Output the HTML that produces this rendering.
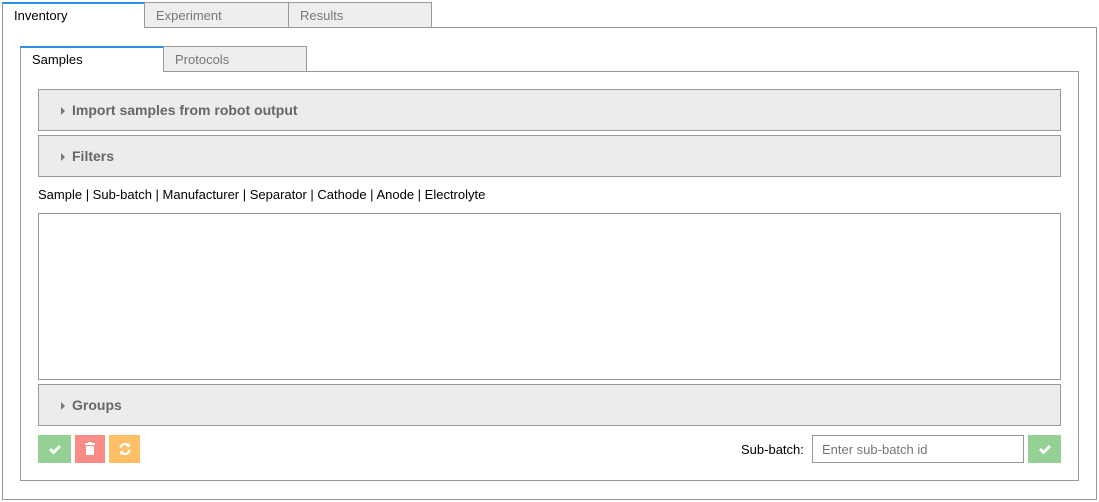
<!DOCTYPE html><html><head><style>
body{margin:0;background:#fff;font-family:"Liberation Sans",Arial,sans-serif;font-size:13px;position:relative;width:1099px;height:502px;overflow:hidden}
.a{position:absolute;box-sizing:border-box}
.tab{height:26px;border:1px solid #999;background:#eee;color:#777;padding:5px 0 0 11px;font-size:13px}
.act{background:#fff;color:#000;border-color:#999;border-top:2px solid #2a8fe6;border-bottom:none;padding-top:4px}
.sec{left:38px;width:1023px;height:42px;border:1px solid #999;background:#ececec;color:#666;font-weight:bold;font-size:14px;padding:12px 0 0 33px}
.sec:before{content:"";position:absolute;left:22px;top:17px;border-left:4px solid #777;border-top:4px solid transparent;border-bottom:4px solid transparent}
.btn{top:435px;height:28px;color:#fff;text-align:center}
</style></head><body>
<div class="a" style="left:2px;top:27px;width:1095px;height:473px;border:1px solid #999"></div>
<div class="a tab act" style="left:2px;top:2px;width:143px;height:26px">Inventory</div>
<div class="a tab" style="left:144px;top:2px;width:145px">Experiment</div>
<div class="a tab" style="left:288px;top:2px;width:144px">Results</div>
<div class="a" style="left:20px;top:71px;width:1059px;height:410px;border:1px solid #999"></div>
<div class="a tab act" style="left:20px;top:46px;width:144px;height:26px">Samples</div>
<div class="a tab" style="left:163px;top:46px;width:144px">Protocols</div>
<div class="a sec" style="top:89px">Import samples from robot output</div>
<div class="a sec" style="top:135px">Filters</div>
<div class="a" style="left:38px;top:187px;color:#000">Sample | Sub-batch | Manufacturer | Separator | Cathode | Anode | Electrolyte</div>
<div class="a" style="left:38px;top:213px;width:1023px;height:167px;border:1px solid #999"></div>
<div class="a sec" style="top:384px">Groups</div>
<div class="a btn" style="left:38px;width:33px;background:#95d095"><svg width="14" height="28" viewBox="0 0 14 28"><path d="M2 14l3.5 3.5L12 11" stroke="#fff" stroke-width="2.8" fill="none"/></svg></div>
<div class="a btn" style="left:75px;width:30px;background:#fa8c85"><svg width="12" height="28" viewBox="0 0 12 28"><rect x="1" y="8" width="10" height="2" fill="#fff"/><rect x="4" y="7" width="4" height="2" fill="#fff"/><rect x="2" y="11" width="8" height="9" fill="#fff"/></svg></div>
<div class="a btn" style="left:109px;width:31px;background:#fdc066"><svg width="14" height="28" viewBox="0 0 14 28"><path d="M2.5 13a4.5 4.5 0 0 1 8.5-1.5M11.5 15a4.5 4.5 0 0 1-8.5 1.5" stroke="#fff" stroke-width="2.2" fill="none"/><path d="M12 8v4h-4zM2 20v-4h4z" fill="#fff"/></svg></div>
<div class="a" style="left:741px;top:442px;color:#000">Sub-batch:</div>
<div class="a" style="left:812px;top:435px;width:212px;height:28px;border:1px solid #999;color:#777;padding:6px 0 0 9px">Enter sub-batch id</div>
<div class="a btn" style="left:1028px;width:33px;background:#95d095"><svg width="14" height="28" viewBox="0 0 14 28"><path d="M2 14l3.5 3.5L12 11" stroke="#fff" stroke-width="2.8" fill="none"/></svg></div>
</body></html>
